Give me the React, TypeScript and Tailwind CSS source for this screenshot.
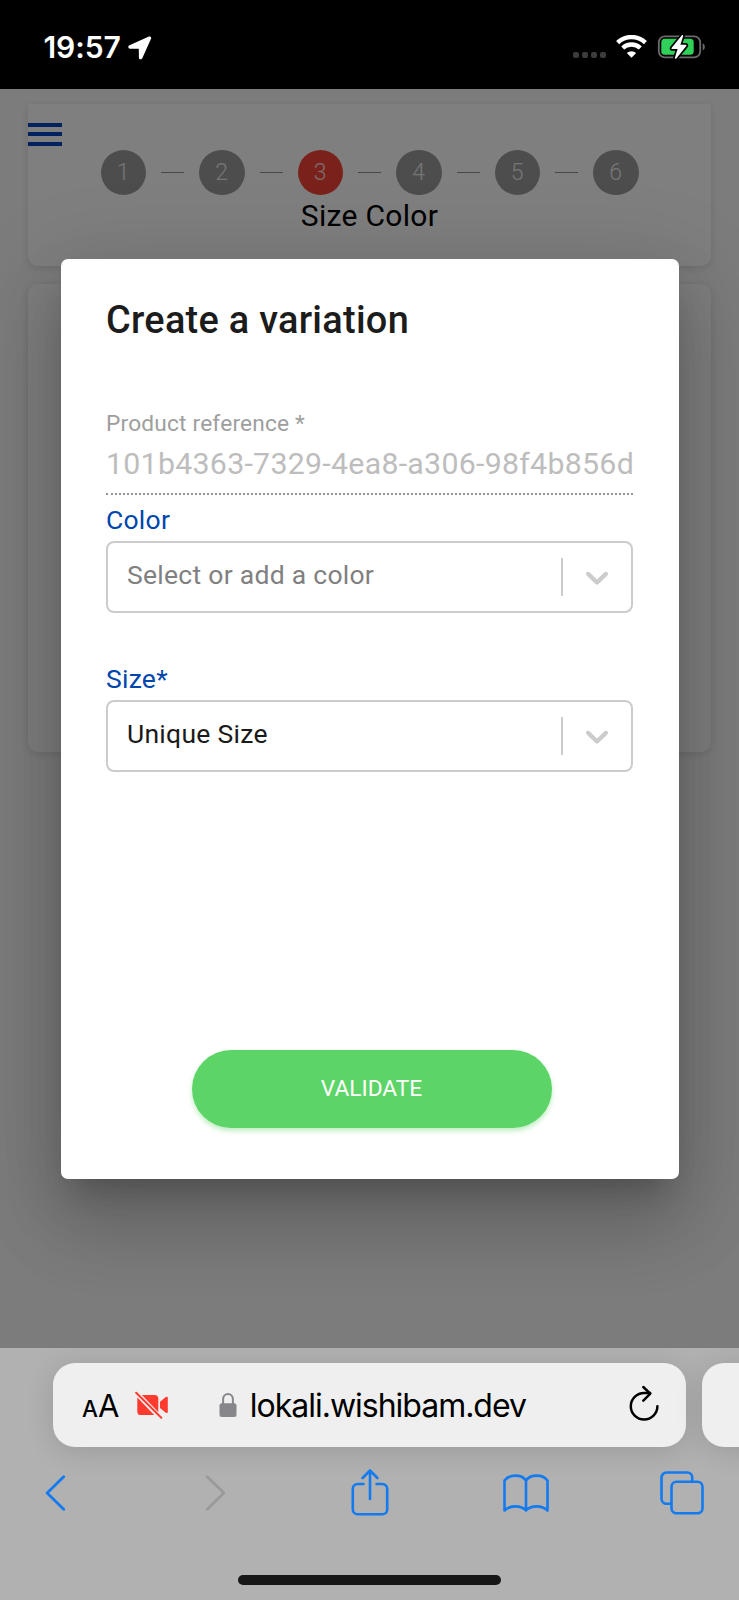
import clsx from 'clsx';

const STEPS = [1, 2, 3, 4, 5, 6];
const CURRENT_STEP = 3;

function StatusBar() {
  return (
    <header className="flex h-[89px] shrink-0 items-start bg-black pl-[43.5px] font-['Inter',sans-serif] text-white">
      <div className="mt-[29px] text-[30px] leading-9 font-semibold tracking-[-0.1px]">19:57</div>
      <svg className="mt-[36px] ml-[7px]" width="24" height="24" viewBox="0 0 24 24" fill="currentColor">
        <path d="M20.9.6 1.5 9.3C-.4 10.2.1 12.7 2 12.7l8.4.1c.3 0 .4.1.4.4l.1 8.200c0 2.200 2.700 2.600 3.500.6L23 2.800C23.700 1.200 22.400 0 20.900.6Z" />
      </svg>
      <div className="mt-[52px] ml-auto flex gap-[3px]">
        {[0, 1, 2, 3].map(dot => (
          <span key={dot} className="h-[6px] w-[6px] rounded-[2px] bg-[#3c3c3c]" />
        ))}
      </div>
      <svg className="mt-[35px] ml-[10px]" width="31" height="23" viewBox="0 0 31 23" fill="none" stroke="currentColor" strokeWidth="4.3">
        <path d="M1.6 7.6a20 20 0 0 1 27.8 0" />
        <path d="M6.7 13a12.8 12.8 0 0 1 17.6 0" />
        <path d="M15.5 22.7 10.8 18a6.9 6.9 0 0 1 9.4 0Z" fill="currentColor" stroke="none" />
      </svg>
      <svg className="mt-[34px] mr-[32.5px] ml-[10px]" width="50" height="26" viewBox="0 0 50 26">
        <rect x="1.8" y="2.3" width="41.4" height="21" rx="6" fill="none" stroke="#6b6b6b" strokeWidth="1.8" />
        <path d="M45.7 9.2c2.8 1.5 2.8 5.7 0 7.2Z" fill="#6b6b6b" />
        <rect x="4.3" y="4.8" width="32.4" height="16" rx="3.6" fill="#30d158" />
        <path d="M24.7 1.5 14.7 13.8c-.5.7-.2 1.3.6 1.3h5.3l-2.7 8.6c-.3 1.2.7 1.5 1.4.7l10-12.3c.5-.7.2-1.3-.6-1.3h-5.3l2.7-8.6c.3-1.2-.7-1.5-1.4-.7Z" fill="#fff" stroke="#000" strokeWidth="3.4" paintOrder="stroke" />
      </svg>
    </header>
  );
}

function Stepper() {
  return (
    <section className="h-[162px] rounded-b-[10px] bg-white shadow-[0_2px_8px_rgba(0,0,0,0.12)]">
      <div className="flex h-[46px] items-start pt-[19px]">
        <div className="flex w-[34px] flex-col gap-[5.5px]">
          <span className="h-[4px] bg-[#0046be]" />
          <span className="h-[4px] bg-[#0046be]" />
          <span className="h-[4px] bg-[#0046be]" />
        </div>
      </div>
      <div className="flex items-center justify-center gap-[15px]">
        {STEPS.map(step => (
          <div key={step} className="flex items-center gap-[15px]">
            {step > 1 && <span className="mt-px h-px w-[23px] bg-[#8f8f8f]" />}
            <span
              className={clsx(
                'flex h-[45.5px] w-[45.5px] items-center justify-center rounded-full pt-[1px] text-[23px] font-light text-white/80',
                step === CURRENT_STEP ? 'bg-[#f44336]' : 'bg-[#9a9a9a]'
              )}
            >
              {step}
            </span>
          </div>
        ))}
      </div>
      <div className="mt-[1.5px] text-center text-[30px] leading-[38px] tracking-[0.3px] text-black">Size Color</div>
    </section>
  );
}

interface SelectFieldProps {
  label: string;
  value: string;
  placeholder?: boolean;
}

function SelectField({ label, value, placeholder }: SelectFieldProps) {
  return (
    <div>
      <div className="h-[40px] text-[26.5px] leading-[38px] tracking-[0.25px] text-[#0046ad]">{label}</div>
      <div className="flex h-[72px] items-center rounded-[8px] border-2 border-[#ccc] pl-[19px]">
        <span
          className={clsx(
            'grow pb-[4px] text-[26.5px] leading-8 tracking-[0.27px]',
            placeholder ? 'text-[#808080]' : 'text-[#1a1a1a]'
          )}
        >
          {value}
        </span>
        <span className="h-[38px] w-[2px] bg-[#ccc]" />
        <svg className="mx-[15px]" width="38" height="38" viewBox="0 0 20 20" fill="#ccc">
          <path d="M4.516 7.548c0.436-0.446 1.043-0.481 1.576 0l3.908 3.747 3.908-3.747c0.533-0.481 1.141-0.446 1.574 0 0.436 0.445 0.408 1.197 0 1.615-0.406 0.418-4.695 4.502-4.695 4.502-0.217 0.223-0.502 0.335-0.787 0.335s-0.57-0.112-0.789-0.335c0 0-4.287-4.084-4.695-4.502s-0.436-1.17 0-1.615z" />
        </svg>
      </div>
    </div>
  );
}

function VariationDialog() {
  return (
    <div className="absolute inset-0 flex items-start justify-center bg-black/50 pt-[169.5px]">
      <div className="flex h-[920px] w-[618px] flex-col rounded-[7px] bg-white px-[45.5px] shadow-[0_21px_28px_-13px_rgba(0,0,0,0.2),0_45px_72px_6px_rgba(0,0,0,0.14),0_17px_87px_15px_rgba(0,0,0,0.12)]">
        <h2 className="mt-[31px] text-[37.9px] leading-[60px] font-medium tracking-[0.28px] text-[#1c1c1c]">Create a variation</h2>
        <div className="mt-[60.5px] text-[22.7px] leading-[28px] tracking-[0.19px] text-[#9e9e9e]">Product reference *</div>
        <div className="mt-[5px] h-[52px] overflow-hidden border-b-2 border-dotted border-[#949494] text-[30.3px] leading-[42px] tracking-[0.28px] whitespace-nowrap text-[#bdbdbd]">
          101b4363-7329-4ea8-a306-98f4b856d
        </div>
        <div className="mt-[6px] flex flex-col gap-[46.5px]">
          <SelectField label="Color" value="Select or add a color" placeholder />
          <SelectField label="Size*" value="Unique Size" />
        </div>
        <button className="mt-auto mb-[51px] ml-[85.5px] h-[78px] w-[360px] rounded-full bg-[#5dd467] pt-[2px] text-[22.7px] text-white shadow-[0_3px_5px_rgba(93,212,103,0.4)]">
          VALIDATE
        </button>
      </div>
    </div>
  );
}

function BrowserBar() {
  return (
    <footer className="flex h-[252px] shrink-0 flex-col overflow-hidden bg-[#b1b1b1] pt-[15px] font-['Inter',sans-serif]">
      <div className="flex gap-[15.5px] pl-[53px]">
        <div className="flex h-[83.5px] w-[633px] shrink-0 items-center rounded-[22px] bg-[#efefef] pr-[27px] pl-[29px] text-black shadow-[0_4px_28px_rgba(0,0,0,0.13)]">
          <div className="flex items-baseline pt-[2px]">
            <span className="text-[22.5px] font-medium">A</span>
            <span className="text-[31px]">A</span>
          </div>
          <svg className="ml-[16px]" width="34" height="30" viewBox="0 0 34 30">
            <rect x="2.3" y="5" width="21" height="20" rx="3.6" fill="#ff3b30" />
            <path d="M25 11.8 30.8 7c.9-.7 2-.3 2 .9v13.9c0 1.2-1.1 1.7-2 .9L25 18Z" fill="#ff3b30" />
            <path d="M2 3.5 26.5 29" stroke="#efefef" strokeWidth="5" />
            <path d="M1.2 2.7 26.3 27.7" stroke="#ff3b30" strokeWidth="2" strokeLinecap="round" />
          </svg>
          <svg className="ml-[49.5px]" width="18" height="26" viewBox="0 0 18 26">
            <path d="M4.1 12.5V7.2a4.9 5.3 0 0 1 9.8 0v5.3" fill="none" stroke="#86868b" strokeWidth="2" />
            <rect x="0.5" y="11.3" width="17" height="13.6" rx="2.5" fill="#86868b" />
          </svg>
          <span className="ml-[13px] pt-[2px] text-[32px] leading-10 tracking-[-1.02px]">lokali.wishibam.dev</span>
          <svg className="mb-[4px] ml-auto" width="30" height="36" viewBox="0 0 30 36" fill="none" stroke="#000" strokeWidth="2.5" strokeLinecap="round" strokeLinejoin="round">
            <path d="M28.4 21.3A13.3 13.3 0 1 1 15.1 8h6" />
            <path d="m14.3 2 7 6.6-7 7" />
          </svg>
        </div>
        <div className="h-[83.5px] w-[200px] shrink-0 rounded-[22px] bg-[#efefef] shadow-[0_4px_28px_rgba(0,0,0,0.13)]" />
      </div>
      <nav className="mt-[18.5px] ml-[-20px] grid h-[56px] w-[780px] grid-cols-5 place-items-center text-[#137af0]">
        <svg className="mr-[6px]" width="21" height="36" viewBox="0 0 21 36" fill="none" stroke="currentColor" strokeWidth="2.8" strokeLinecap="round" strokeLinejoin="round">
          <path d="M18.7 1.7 2.1 18l16.6 16.3" />
        </svg>
        <svg className="ml-[3px]" width="21" height="36" viewBox="0 0 21 36" fill="none" stroke="#999" strokeWidth="2.6" strokeLinecap="round" strokeLinejoin="round">
          <path d="M2.3 1.7 18.9 18 2.3 34.3" />
        </svg>
        <svg className="mr-[1px] mb-[2px]" width="38" height="48" viewBox="0 0 38 48" fill="none" stroke="currentColor" strokeWidth="2.6" strokeLinecap="round" strokeLinejoin="round">
          <path d="M12.5 16H6.6a4.8 4.8 0 0 0-4.8 4.8v20.7a4.8 4.8 0 0 0 4.8 4.8h24.8a4.8 4.8 0 0 0 4.8-4.8V20.8a4.8 4.8 0 0 0-4.8-4.8h-5.9" />
          <path d="M19 31V2.8M11.6 10 19 2.5l7.4 7.5" />
        </svg>
        <svg width="46" height="40" viewBox="0 0 46 40" fill="none" stroke="currentColor" strokeWidth="2.6" strokeLinejoin="round">
          <path d="M23 7.5C18.5 1 6.5 1 1.500 7.500v30C7 32 18 32 23 37.500 28 32 39 32 44.500 37.500v-30C39.500 1 27.500 1 23 7.500Zm0 0v30" />
        </svg>
        <svg width="44" height="44" viewBox="0 0 44 44" fill="none" stroke="currentColor" strokeWidth="2.6">
          <path d="M32.2 10.8V6.5a5 5 0 0 0-5-5H6.500a5 5 0 0 0-5 5v21.200a5 5 0 0 0 5 5h5" />
          <rect x="11.5" y="10.8" width="31" height="31.5" rx="5" />
        </svg>
      </nav>
      <div className="mt-auto mb-[15px] h-[10px] w-[263px] self-center rounded-full bg-[#171717]" />
    </footer>
  );
}

export default function App() {
  return (
    <div className="flex h-[1600px] w-[739px] flex-col overflow-hidden font-['Roboto',sans-serif]">
      <StatusBar />
      <main className="relative flex grow flex-col gap-[18px] overflow-hidden bg-[#f9f9fa] px-[28px] pt-[14.5px]">
        <Stepper />
        <section className="h-[468px] rounded-[10px] bg-white shadow-[0_2px_8px_rgba(0,0,0,0.12)]" />
        <VariationDialog />
      </main>
      <BrowserBar />
    </div>
  );
}
